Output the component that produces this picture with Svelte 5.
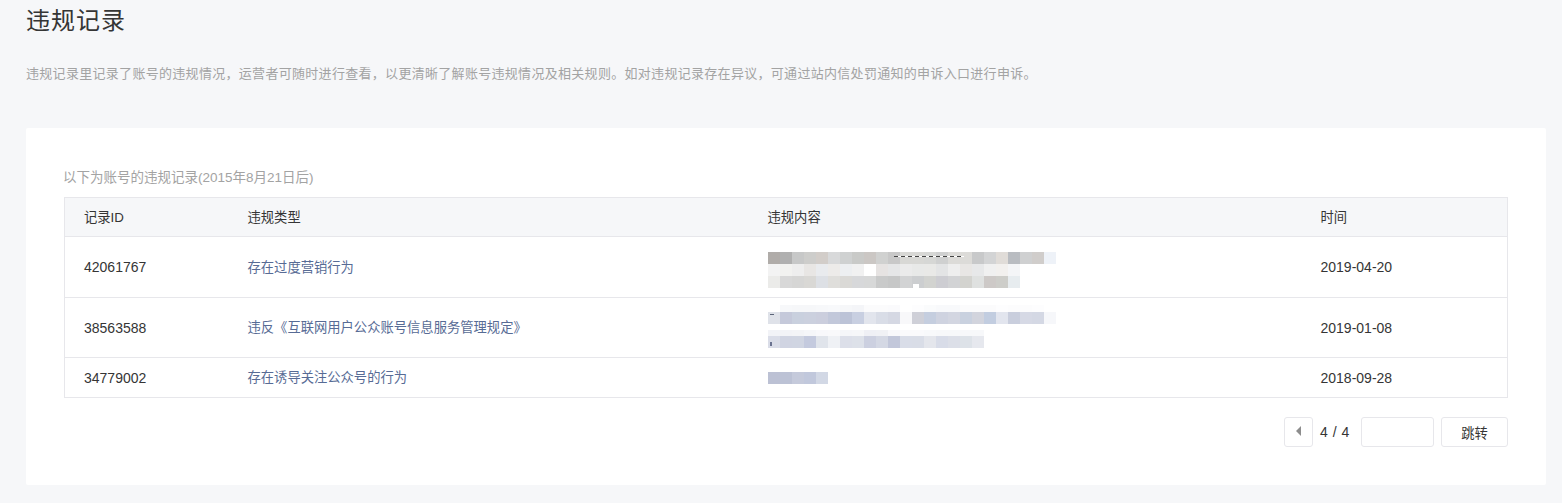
<script>
  // blurred cells of the "content" column, 12px wide each, h = row height
  const c = (s) => s.split(' ').map((v) => '#' + v);

  const records = [
    {
      id: '42061767',
      type: '存在过度营销行为',
      time: '2019-04-20',
      rowClass: 'tall',
      top: 15,
      blur: [
        { h: 12, cells: c('b0aca9 b0b0b0 c7c8c8 cdcdcb d2cdc9 d8d9da cfd1d1 c9cac8 cbc7c4 d0d1d0 c8c8c8 d8d8d5 d8d8d5 d6d7d5 cfd0d0 dcdbd8 dcdbd8 c8c9ca d3d4d5 e0dcd8 b9bcc1 cfd0d1 d0cdcb eef2f8') },
        { h: 12, cells: c('f3f3f3 f2f2f0 eeeeee e8e6e4 e9ebee edebe9 edeff1 f1f1f1 ffffff e6e3e2 e5e6e7 ebebeb e8e9e8 e9e9e7 e3e4e5 eeeeee e8e6e4 e7e8e9 f0f0f0 f2f0ee f4f5f7') },
        { h: 12, cells: c('ebebe9 d8d8d8 d6d6d5 d9d8d5 dde0e5 dfdedb dad9d6 d7d8da d7d8d8 c9caca c6c7c7 d2d3d4 ccced0 d2d3d0 cdcdd2 d2d3d5 d3d3cf dfe1e0 cdc9c7 cdcdc9 e7ecef') }
      ],
      marks: [
        { x: 126, y: 4, w: 70, h: 1, color: 'repeating-linear-gradient(90deg, #444 0 4px, #fff 4px 7px)' },
        { x: 145, y: 32, w: 6, h: 4, color: '#fff' }
      ]
    },
    {
      id: '38563588',
      type: '违反《互联网用户公众账号信息服务管理规定》',
      time: '2019-01-08',
      rowClass: 'mid',
      top: 7,
      blur: [
        { h: 7, cells: c('ffffff f7f8fa f6f7f9 f6f7f9 f7f8fa f8f9fb f6f7f9 f4f5f8 fbfbfc fbfbfc fafafc ffffff fdfdfe fafbfc f8f9fb f8f9fb fbfbfc fbfbfc fbfbfc fdfdfe fcfcfd fcfcfd fdfdfe ffffff') },
        { h: 12, cells: c('dfe2e9 c5c9da c9d0de cbd0de cbcedd c2c8da bcc3d7 c8cfe1 e2e5ed d9dde7 d5d8e3 f8f8fa cfd0d8 c5cedf cfd3e0 d3d6e1 c9d1df d2d4dd c2cde0 e2e5ee c9cedd d6d9e5 d4d8e4 f6f7fa') },
        { h: 6, cells: c('ffffff') },
        { h: 6, cells: c('f2f3f7 f2f3f7 f3f4f7 f5f6f9 f8f8fb f9f9fb f5f6f9 f6f7f9 eff0f5 f0f1f5 f8f8fb fafafc fafafc f8f9fb f7f8fa f7f8fa f7f8fa f7f8fa') },
        { h: 12, cells: c('dadde8 d0d4e2 d0d5e2 c4cade e0e4eb eff1f5 dcdfe9 dde1e9 ccd0e0 d4d8e4 c2c7da d9dde8 d9dde7 e4e6ec d8dce8 dcdfe8 dde2e8 e6e8ee') }
      ],
      marks: [
        { x: 2, y: 9, w: 4, h: 1, color: '#5b6478' },
        { x: 2, y: 37, w: 2, h: 4, color: '#6b7390' }
      ]
    },
    {
      id: '34779002',
      type: '存在诱导关注公众号的行为',
      time: '2018-09-28',
      rowClass: 'short',
      top: 14,
      blur: [{ h: 12, cells: c('bcc1d4 bcc2d5 c5cadb c1c8dc d2d8e5') }],
      marks: []
    }
  ];
</script>

<main class="page">
  <h1>违规记录</h1>
  <p class="desc">违规记录里记录了账号的违规情况，运营者可随时进行查看，以更清晰了解账号违规情况及相关规则。如对违规记录存在异议，可通过站内信处罚通知的申诉入口进行申诉。</p>

  <section class="card">
    <div class="caption">以下为账号的违规记录(2015年8月21日后)</div>
    <table>
      <thead>
        <tr>
          <th class="c1">记录ID</th>
          <th class="c2">违规类型</th>
          <th class="c3">违规内容</th>
          <th class="c4">时间</th>
        </tr>
      </thead>
      <tbody>
        {#each records as rec}
          <tr class={rec.rowClass}>
            <td class="num">{rec.id}</td>
            <td><a href="#top">{rec.type}</a></td>
            <td class="blur-cell" style="padding-top: {rec.top}px">
              <div class="blur">
                {#each rec.blur as line}
                  <div class="blur-line" style="height: {line.h}px">
                    {#each line.cells as color}
                      <span style="background: {color}"></span>
                    {/each}
                  </div>
                {/each}
                {#each rec.marks as m}
                  <b class="mark" style="left: {m.x}px; top: {m.y}px; width: {m.w}px; height: {m.h}px; background: {m.color}"></b>
                {/each}
              </div>
            </td>
            <td class="num">{rec.time}</td>
          </tr>
        {/each}
      </tbody>
    </table>

    <div class="pager">
      <button class="prev" type="button" aria-label="上一页"><i></i></button>
      <span class="count">4 / 4</span>
      <input type="text" />
      <button class="go" type="button">跳转</button>
    </div>
  </section>
</main>

<style>
  :global(body) {
    background: #f6f7f9;
    font-family: "Liberation Sans", "Noto Sans CJK SC", sans-serif;
    color: #353535;
  }
  .page {
    padding: 4px 16px 18px 26px;
  }
  h1 {
    margin: 0;
    font-size: 24px;
    line-height: 34px;
    font-weight: 400;
    letter-spacing: 1px;
  }
  .desc {
    margin: 25px 0 0;
    font-size: 13px;
    line-height: 22px;
    letter-spacing: 0.3px;
    color: #a3a3a3;
  }
  .card {
    margin-top: 43px;
    height: 357px;
    box-sizing: border-box;
    padding: 41px 38px 0;
    background: #fff;
    border-radius: 2px;
  }
  .caption {
    font-size: 13.5px;
    line-height: 18px;
    color: #a3a3a3;
    margin: 0 0 10px -1px;
  }
  table {
    width: 1444px;
    table-layout: fixed;
    border-collapse: collapse;
    font-size: 13.3px;
    border: 1px solid #e7e7eb;
  }
  th,
  td {
    box-sizing: border-box;
    padding: 0 0 0 19px;
    border-bottom: 1px solid #e7e7eb;
  }
  th {
    height: 39px;
    padding-bottom: 2px;
    text-align: left;
    font-weight: 400;
    background: #f6f7f9;
  }
  .c1 { width: 164px; }
  .c2 { width: 520px; }
  .c3 { width: 553px; }
  td {
    vertical-align: middle;
  }
  td.num {
    font-size: 14px;
  }
  .tall td { height: 61px; }
  .mid td { height: 60px; }
  .short td { height: 40px; }
  td.blur-cell {
    vertical-align: top;
  }
  a {
    display: block;
    margin-top: -2px;
    color: #576b95;
    text-decoration: none;
  }
  .blur {
    position: relative;
  }
  .blur-line {
    display: flex;
  }
  .blur-line span {
    width: 12px;
    flex: none;
  }
  .mark {
    position: absolute;
  }
  .pager {
    display: flex;
    justify-content: flex-end;
    align-items: center;
    margin-top: 19px;
    font-size: 14px;
  }
  .pager button,
  .pager input {
    box-sizing: border-box;
    height: 30px;
    background: #fff;
    border: 1px solid #e7e7eb;
    border-radius: 3px;
    padding: 0;
    font: inherit;
    color: inherit;
  }
  .prev {
    width: 29px;
    display: flex;
    align-items: center;
    justify-content: center;
  }
  .prev i {
    width: 0;
    height: 0;
    border: 5px solid transparent;
    border-left-width: 0;
    border-right: 5px solid #8d8d8d;
    margin-top: -2px;
  }
  .count {
    margin: 0 12px 0 7px;
    width: 29px;
    white-space: nowrap;
    letter-spacing: 0.5px;
  }
  .pager input {
    width: 73px;
    outline: none;
  }
  .pager .go {
    width: 67px;
    margin-left: 7px;
    font-size: 13.3px;
  }
</style>
